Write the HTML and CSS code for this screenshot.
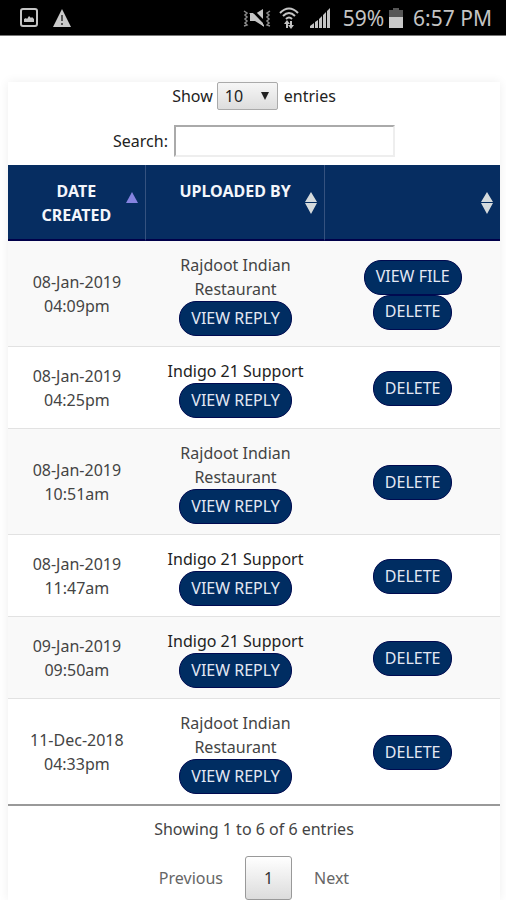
FILE: index.html
```html
<!DOCTYPE html>
<html lang="en">
<head>
<meta charset="utf-8">
<meta name="viewport" content="width=device-width, initial-scale=1">
<title>Uploaded files</title>
<link rel="stylesheet" href="styles.css">
</head>
<body>
<header class="status">
  <svg class="icon" width="18" height="20" viewBox="0 0 18 20"><rect x="1" y="1" width="16" height="17" rx="2" fill="none" stroke="#c4c4c4" stroke-width="2"/><path d="M4 14v-3l2-1 1 1 2-3 2 2 1-1 2 2v3z" fill="#c4c4c4"/></svg>
  <svg class="icon alert" width="18" height="18" viewBox="0 0 18 18"><path d="M9 0l9 18H0z" fill="#cacaca"/><path d="M9 6v6M9 14v2" stroke="#555" stroke-width="2"/></svg>
  <div class="system">
    <svg class="icon" width="28" height="20" viewBox="0 0 28 20"><path d="M1 3l3 2-2 2 2 2-2 2 2 2-2 2 2 2-3 1M27 3l-3 2 2 2-2 2 2 2-2 2 2 2-2 2 3 1" fill="none" stroke="#8d8d8d" stroke-width="1.5"/><path d="M7 6h5l8-5v17l-8-5H7z" fill="#c4c4c4"/><path d="M9 2l14 14" stroke="#000" stroke-width="3"/><path d="M6 5l4 0 11 12v2z" fill="#c4c4c4"/></svg>
    <svg class="icon wifi" width="20" height="22" viewBox="0 0 20 22"><g fill="none" stroke="#c4c4c4" stroke-width="2"><path d="M1 6q9-9 18 0M4 9q6-6 12 0M7 12q3-3 6 0"/></g><path d="M9 21H7v-4H5l3-4 3 4H9zM11 14h2v4h2l-3 4-3-4h2z" fill="#c4c4c4"/></svg>
    <svg class="icon signal" width="20" height="20" viewBox="0 0 20 20"><path d="M0 20v-2l4-3v5zM5 20v-6l3-2v8zM9 20v-9l3-3v12zM13 20V7l3-3v16zM17 20V3l3-3v20z" fill="#c4c4c4"/></svg>
    <span>59%</span>
    <svg class="icon battery" width="14" height="20" viewBox="0 0 14 20"><path d="M4 0h6v2h4v7H0V2h4z" fill="#565656"/><path d="M0 9h14v11H0z" fill="#c8c8c8"/></svg>
    <span>6:57 PM</span>
  </div>
</header>
<main class="card">
  <div class="length">
    <label for="length">Show</label>
    <span class="select"><select id="length"><option>10</option><option>25</option></select></span>
    <span>entries</span>
  </div>
  <div class="search"><label for="search">Search:</label><input id="search" type="search"></div>
  <table>
    <colgroup><col class="c-date"><col class="c-by"><col class="c-act"></colgroup>
    <thead>
      <tr>
        <th scope="col">DATE CREATED<svg class="sort up" width="12" height="11" viewBox="0 0 12 11"><path d="M6 0l6 11H0z" fill="#8583e0"/></svg></th>
        <th scope="col">UPLOADED BY<svg class="sort" width="12" height="22" viewBox="0 0 12 22"><path d="M6 0l6 10H0zM0 11h12L6 22z" fill="#d5dadc"/></svg></th>
        <th scope="col"><svg class="sort" width="12" height="22" viewBox="0 0 12 22"><path d="M6 0l6 10H0zM0 11h12L6 22z" fill="#d5dadc"/></svg></th>
      </tr>
    </thead>
    <tbody>
      <tr><td class="date">08-Jan-2019 04:09pm</td><td>Rajdoot Indian Restaurant<button>VIEW REPLY</button></td><td><button>VIEW FILE</button><button>DELETE</button></td></tr>
      <tr><td class="date">08-Jan-2019 04:25pm</td><td class="support">Indigo 21 Support<button>VIEW REPLY</button></td><td><button>DELETE</button></td></tr>
      <tr><td class="date">08-Jan-2019 10:51am</td><td>Rajdoot Indian Restaurant<button>VIEW REPLY</button></td><td><button>DELETE</button></td></tr>
      <tr><td class="date">08-Jan-2019 11:47am</td><td class="support">Indigo 21 Support<button>VIEW REPLY</button></td><td><button>DELETE</button></td></tr>
      <tr><td class="date">09-Jan-2019 09:50am</td><td class="support">Indigo 21 Support<button>VIEW REPLY</button></td><td><button>DELETE</button></td></tr>
      <tr><td class="date">11-Dec-2018 04:33pm</td><td>Rajdoot Indian Restaurant<button>VIEW REPLY</button></td><td><button>DELETE</button></td></tr>
    </tbody>
  </table>
  <p class="info">Showing 1 to 6 of 6 entries</p>
  <nav class="pages"><a href="#">Previous</a><a href="#" class="current">1</a><a href="#">Next</a></nav>
</main>
</body>
</html>
```

FILE: styles.css
```css
* { box-sizing: border-box; }
body {
  margin: 0;
  background: #fff;
  color: #444;
  font: 16px/24px "Noto Sans", "Open Sans", sans-serif;
}
.status {
  display: flex;
  align-items: center;
  height: 36px;
  padding: 0 14px 0 20px;
  background: #000;
  border-bottom: 1px solid #777;
  color: #c4c4c4;
  font: 21px/24px "Noto Sans", sans-serif;
}
.icon { display: block; flex: none; }
.alert { margin-left: 15px; }
.system { display: flex; align-items: center; margin-left: auto; }
.wifi { margin-left: 8px; }
.signal { margin: 0 13px 0 11px; }
.battery { margin: 0 10px 0 5px; }
.card {
  margin: 46px 6px 0 8px;
  box-shadow: 0 0 10px #eee;
}
.length, .search {
  display: flex;
  justify-content: center;
  align-items: center;
  color: #222;
}
.length { gap: 4px; }
.select { position: relative; margin-right: 2px; }
.select::after {
  content: "";
  position: absolute;
  right: 9px;
  top: 10px;
  border: 4px solid transparent;
  border-top: 8px solid #222;
  border-bottom: 0;
  pointer-events: none;
}
select {
  display: block;
  appearance: none;
  width: 61px;
  height: 28px;
  padding: 0 7px;
  border: 1px solid #aaa;
  border-radius: 2px;
  background: linear-gradient(#f6f6f6, #ddd);
  color: #222;
  font: inherit;
}
.search { gap: 6px; padding: 15px 0 8px; }
input {
  width: 221px;
  height: 32px;
  padding: 2px 6px;
  border: 2px solid;
  border-color: #aaa #eee #eee #aaa;
  background: #fff;
  font: inherit;
}
table { width: 100%; table-layout: fixed; border-collapse: separate; border-spacing: 0; border-bottom: 2px solid #999; }
.c-date { width: 28%; }
.c-by { width: 36.5%; }
.c-act { width: 35.5%; }
th {
  position: relative;
  height: 76px;
  padding: 14px 30px 12px;
  border-right: 1px solid #35527f;
  border-bottom: 2px solid #00004a;
  background: #062d61;
  color: #f4f6fb;
  vertical-align: top;
}
th:last-child { border-right: 0; }
.sort { position: absolute; right: 7px; top: 27px; }
td { padding: 12px 30px 10px; border-bottom: 1px solid #e2e2e2; text-align: center; }
td.date { padding: 11px 18px; }
td.support { padding-left: 8px; padding-right: 8px; color: #222; }
tr:nth-child(odd) td { background: #f9f9f9; }
tbody tr:last-child td { border-bottom: 0; }
button {
  display: block;
  height: 35px;
  margin: 0 auto;
  padding: 0 11px 2px;
  border: 1px solid #000a50;
  border-radius: 17px;
  background: #002d62;
  color: #e4e8f4;
  font: inherit;
}
.info { margin: 11px 0 15px; text-align: center; }
.pages { display: flex; justify-content: center; align-items: center; gap: 22px; }
.pages a { color: #666; text-decoration: none; }
.pages .current {
  width: 47px;
  height: 44px;
  border: 1px solid #999;
  border-radius: 3px;
  background: linear-gradient(#fff, #dcdcdc);
  color: #333;
  line-height: 42px;
  text-align: center;
}
```
